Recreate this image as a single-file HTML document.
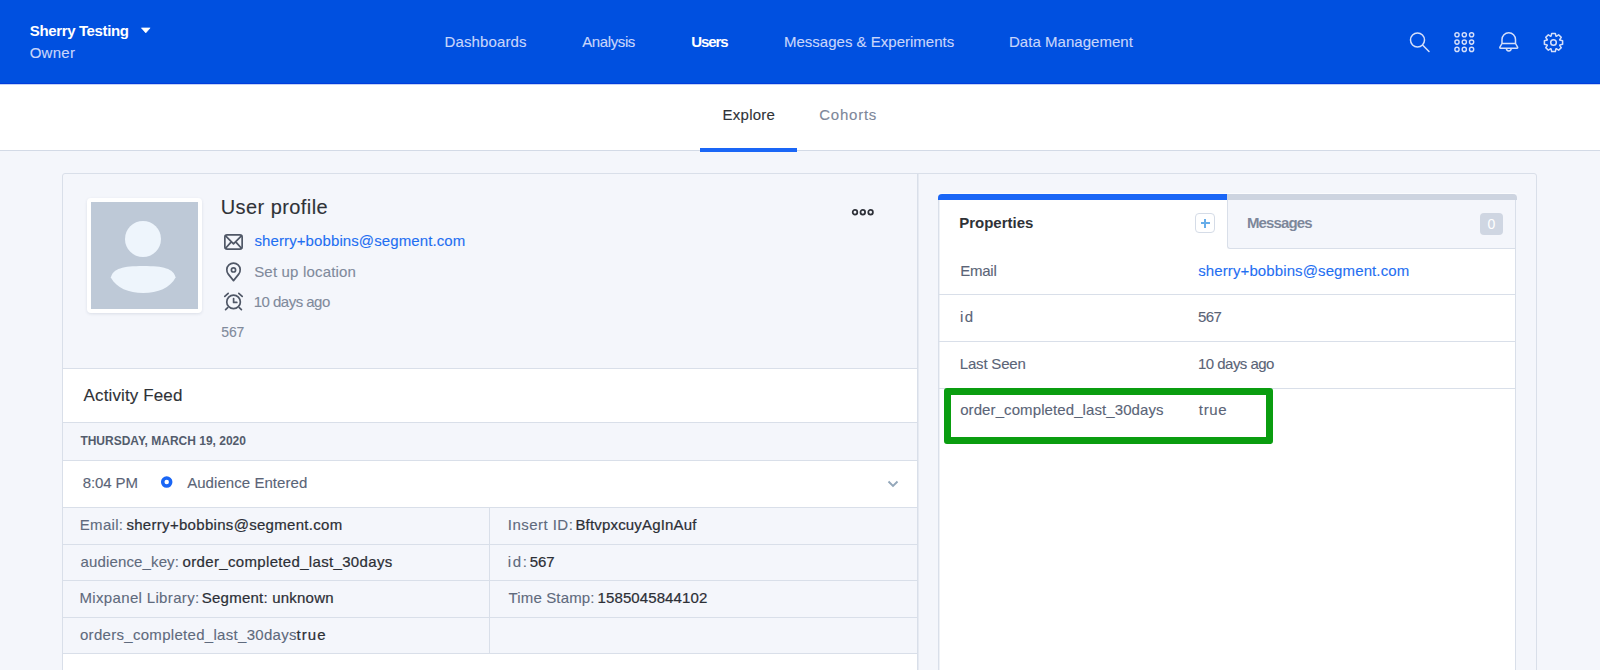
<!DOCTYPE html>
<html><head><meta charset="utf-8"><style>
html,body{margin:0;padding:0;width:1600px;height:670px;overflow:hidden;background:#f4f6fb;font-family:"Liberation Sans", sans-serif}
.t{position:absolute;white-space:nowrap}
.bm{display:inline-block;width:0;height:0;vertical-align:baseline}
</style></head><body>

<div style="position:absolute;left:0;top:0;width:1600px;height:84px;background:#0050e0"></div>
<div style="position:absolute;left:0;top:83px;width:1600px;height:1px;background:#003ddc"></div>
<div style="position:absolute;left:0;top:84px;width:1600px;height:66px;background:#fff"></div>
<div style="position:absolute;left:0;top:84px;width:1600px;height:1px;background:#c4d3f6"></div>
<div style="position:absolute;left:0;top:150px;width:1600px;height:1px;background:#d3dae6"></div>
<div style="position:absolute;left:700px;top:148px;width:97px;height:4px;background:#1a66f6"></div>
<!-- card -->
<div style="position:absolute;left:62px;top:173px;width:1473px;height:600px;border:1px solid #d9dfe9;border-radius:3px;background:#f4f6fb"></div>
<div style="position:absolute;left:917px;top:174px;width:1px;height:500px;background:#d9dfe9"></div>
<div style="position:absolute;left:918px;top:174px;width:1px;height:500px;background:#e6eaf2"></div>
<!-- avatar -->
<div style="position:absolute;left:87px;top:198px;width:115px;height:115px;background:#fff;border-radius:4px;box-shadow:0 1px 3px rgba(40,60,90,.12)"></div>
<div style="position:absolute;left:91px;top:202px;width:107px;height:107px;background:#bec9d7"></div>
<div style="position:absolute;left:125px;top:221px;width:36px;height:36px;border-radius:50%;background:#eef5fc"></div>
<svg style="position:absolute;left:100px;top:260px" width="90" height="40" viewBox="100 260 90 40"><path d="M110.8 277.5 C113 268.5 123 266 143.2 266 C163.5 266 173.5 268.5 175.6 277.5 C170 288 158 293 143.2 293 C128.5 293 116.5 288 110.8 277.5 Z" fill="#eef5fc"/></svg>
<!-- profile icons -->
<svg style="position:absolute;left:218px;top:228px" width="32" height="90" viewBox="218 228 32 90" fill="none" stroke="#4f5766" stroke-width="1.7" stroke-linecap="round" stroke-linejoin="round">
<rect x="224.85" y="234.85" width="17.3" height="14.3" rx="2.3"/>
<path d="M225.6 235.8 L233.5 243.8 L241.4 235.8 M225.6 248.3 L230.6 242.6 M241.4 248.3 L236.4 242.6"/>
<path d="M233.5 280.6 L228.28 274.1 A6.7 6.7 0 1 1 238.72 274.1 Z"/>
<circle cx="233.5" cy="269.9" r="2.1"/>
<circle cx="233.55" cy="301.9" r="6.8"/>
<path d="M233.6 298.6 V302.4 H236.8"/>
<path d="M224.8 296.4 L228.2 293.4 M242.2 296.4 L238.8 293.4 M225.6 309.6 L227.7 307.6 M241.4 309.6 L239.3 307.6"/>
</svg>
<!-- dots menu -->
<svg style="position:absolute;left:850px;top:207px" width="26" height="11" viewBox="0 0 26 11">
<circle cx="5" cy="5.2" r="2.3" fill="none" stroke="#2d3038" stroke-width="1.75"/>
<circle cx="12.8" cy="5.2" r="2.3" fill="none" stroke="#2d3038" stroke-width="1.75"/>
<circle cx="20.6" cy="5.2" r="2.3" fill="none" stroke="#2d3038" stroke-width="1.75"/>
</svg>
<!-- activity feed -->
<div style="position:absolute;left:63px;top:368px;width:854px;height:1px;background:#d9dfe9"></div>
<div style="position:absolute;left:63px;top:369px;width:854px;height:53px;background:#fff"></div>
<div style="position:absolute;left:63px;top:422px;width:854px;height:1px;background:#d9dfe9"></div>
<div style="position:absolute;left:63px;top:460px;width:854px;height:1px;background:#d9dfe9"></div>
<div style="position:absolute;left:63px;top:461px;width:854px;height:46px;background:#fff"></div>
<div style="position:absolute;left:63px;top:507px;width:854px;height:1px;background:#d9dfe9"></div>
<div style="position:absolute;left:63px;top:544px;width:854px;height:1px;background:#d9dfe9"></div>
<div style="position:absolute;left:63px;top:580px;width:854px;height:1px;background:#d9dfe9"></div>
<div style="position:absolute;left:63px;top:617px;width:854px;height:1px;background:#d9dfe9"></div>
<div style="position:absolute;left:63px;top:653px;width:854px;height:1px;background:#d9dfe9"></div>
<div style="position:absolute;left:63px;top:654px;width:854px;height:20px;background:#fff"></div>
<div style="position:absolute;left:489px;top:508px;width:1px;height:145px;background:#d9dfe9"></div>
<svg style="position:absolute;left:155px;top:472px" width="24" height="20" viewBox="155 472 24 20"><circle cx="166.7" cy="482.1" r="4.0" fill="none" stroke="#1a66f5" stroke-width="3.5"/></svg>
<svg style="position:absolute;left:886px;top:479px" width="14" height="10" viewBox="0 0 14 10"><path d="M2.5 2.5 L7 7 L11.5 2.5" fill="none" stroke="#93a7ba" stroke-width="1.9"/></svg>
<!-- right panel -->
<div style="position:absolute;left:938px;top:194px;width:578px;height:500px;box-sizing:border-box;border:1px solid #d9dfe9;border-top:none;background:#fff;border-radius:4px 4px 0 0"></div>
<div style="position:absolute;left:938px;top:193px;width:579px;height:1px;background:#fbfcfe;border-radius:4px 4px 0 0"></div>
<div style="position:absolute;left:938px;top:194px;width:289px;height:6px;background:#1a66f6;border-radius:4px 0 0 0"></div>
<div style="position:absolute;left:1227px;top:194px;width:290px;height:6px;background:#cdd4e0;border-radius:0 4px 0 0"></div>
<div style="position:absolute;left:1227px;top:200px;width:288px;height:49px;box-sizing:border-box;border-left:1px solid #d9dfe9;border-bottom:1px solid #d9dfe9;background:#f4f6fb;border-radius:0 0 0 3px"></div>
<div style="position:absolute;left:1195px;top:213px;width:20px;height:20px;box-sizing:border-box;border:1px solid #d5dce7;border-radius:4px;background:#fff"></div>
<div style="position:absolute;left:1200.5px;top:222px;width:9px;height:2px;background:#67ade9"></div>
<div style="position:absolute;left:1204px;top:218.5px;width:2px;height:9px;background:#67ade9"></div>
<div style="position:absolute;left:1480px;top:213px;width:23px;height:22px;border-radius:4px;background:#cfd6e2"></div>
<div style="position:absolute;left:1480px;top:213px;width:23px;height:22px;text-align:center;line-height:22px;font-size:14px;color:#fff">0</div>
<div style="position:absolute;left:939px;top:200px;width:1px;height:480px;background:#eef1f6"></div>
<div style="position:absolute;left:939px;top:294px;width:576px;height:1px;background:#d9dfe9"></div>
<div style="position:absolute;left:939px;top:341px;width:576px;height:1px;background:#d9dfe9"></div>
<div style="position:absolute;left:939px;top:388px;width:576px;height:1px;background:#d9dfe9"></div>
<div style="position:absolute;left:944px;top:388px;width:329px;height:56px;box-sizing:border-box;border:7px solid #0a9d10;border-radius:3px"></div>
<!-- header icons -->
<svg style="position:absolute;left:1400px;top:22px" width="180" height="40" viewBox="1400 22 180 40" fill="none" stroke="#d5dffa" stroke-width="1.5">
<circle cx="1417.5" cy="40" r="7.0"/>
<path d="M1422.8 45.3 L1429 51.5" stroke-linecap="round"/>
<g stroke-width="1.4">
<circle cx="1457" cy="34.8" r="2.1"/><circle cx="1464.3" cy="34.8" r="2.1"/><circle cx="1471.6" cy="34.8" r="2.1"/>
<circle cx="1457" cy="42.1" r="2.1"/><circle cx="1464.3" cy="42.1" r="2.1"/><circle cx="1471.6" cy="42.1" r="2.1"/>
<circle cx="1457" cy="49.4" r="2.1"/><circle cx="1464.3" cy="49.4" r="2.1"/><circle cx="1471.6" cy="49.4" r="2.1"/>
</g>
<path d="M1502 43.5 V39.6 A6.75 6.75 0 0 1 1515.5 39.6 V43.5 M1502 43.5 H1515.5 L1517.6 47.2 Q1518 48.2 1517 48.2 H1500.5 Q1499.5 48.2 1499.9 47.2 Z" stroke-linejoin="round"/>
<path d="M1506.4 48.5 A2.4 2.4 0 0 0 1511.2 48.5"/>
</svg>
<svg style="position:absolute;left:1543px;top:32px" width="21" height="21" viewBox="-10.5 -10.5 21 21" fill="none" stroke="#d5dffa" stroke-width="1.5">
<path d="M6.36 -2.40 L9.11 -1.85 L9.11 1.85 L6.36 2.40 L6.19 2.81 L7.75 5.14 L5.14 7.75 L2.81 6.19 L2.40 6.36 L1.85 9.11 L-1.85 9.11 L-2.40 6.36 L-2.81 6.19 L-5.14 7.75 L-7.75 5.14 L-6.19 2.81 L-6.36 2.40 L-9.11 1.85 L-9.11 -1.85 L-6.36 -2.40 L-6.19 -2.81 L-7.75 -5.14 L-5.14 -7.75 L-2.81 -6.19 L-2.40 -6.36 L-1.85 -9.11 L1.85 -9.11 L2.40 -6.36 L2.81 -6.19 L5.14 -7.75 L7.75 -5.14 L6.19 -2.81Z" stroke-linejoin="round"/>
<circle cx="0" cy="0" r="2.8"/>
</svg>
<svg style="position:absolute;left:140px;top:26px" width="12" height="8" viewBox="0 0 12 8"><path d="M1.4 1.9 H10.1 L5.75 6.9Z" fill="#fff" stroke="#fff" stroke-width="0.6" stroke-linejoin="round"/></svg>

<div id="hname" class="t" style="left:29.79px;top:21.71px;font-size:15px;line-height:18px;font-weight:700;color:#ffffff;letter-spacing:-0.364px;">Sherry Testing<i class="bm"></i></div><div id="hrole" class="t" style="left:29.67px;top:43.90px;font-size:15px;line-height:18px;font-weight:400;color:#c9d6fb;letter-spacing:0.289px;-webkit-text-stroke:0.12px #c9d6fb;">Owner<i class="bm"></i></div><div id="n1" class="t" style="left:444.58px;top:33.01px;font-size:15px;line-height:18px;font-weight:400;color:#c9d6fb;letter-spacing:0.108px;-webkit-text-stroke:0.12px #c9d6fb;">Dashboards<i class="bm"></i></div><div id="n2" class="t" style="left:582.26px;top:33.01px;font-size:15px;line-height:18px;font-weight:400;color:#c9d6fb;letter-spacing:-0.399px;-webkit-text-stroke:0.12px #c9d6fb;">Analysis<i class="bm"></i></div><div id="n3" class="t" style="left:691.19px;top:33.01px;font-size:15px;line-height:18px;font-weight:700;color:#ffffff;letter-spacing:-1.100px;">Users<i class="bm"></i></div><div id="n4" class="t" style="left:783.98px;top:33.01px;font-size:15px;line-height:18px;font-weight:400;color:#c9d6fb;letter-spacing:0.008px;-webkit-text-stroke:0.12px #c9d6fb;">Messages &amp; Experiments<i class="bm"></i></div><div id="n5" class="t" style="left:1008.98px;top:33.01px;font-size:15px;line-height:18px;font-weight:400;color:#c9d6fb;letter-spacing:0.037px;-webkit-text-stroke:0.12px #c9d6fb;">Data Management<i class="bm"></i></div><div id="s1" class="t" style="left:722.54px;top:106.01px;font-size:15px;line-height:18px;font-weight:400;color:#2f3237;letter-spacing:0.259px;-webkit-text-stroke:0.12px #2f3237;">Explore<i class="bm"></i></div><div id="s2" class="t" style="left:819.26px;top:106.01px;font-size:15px;line-height:18px;font-weight:400;color:#7d879a;letter-spacing:0.764px;-webkit-text-stroke:0.12px #7d879a;">Cohorts<i class="bm"></i></div><div id="up" class="t" style="left:220.71px;top:195.41px;font-size:20px;line-height:24px;font-weight:400;color:#2f3237;letter-spacing:0.434px;-webkit-text-stroke:0.12px #2f3237;">User profile<i class="bm"></i></div><div id="ue" class="t" style="left:254.49px;top:232.01px;font-size:15px;line-height:18px;font-weight:400;color:#1f6ff2;letter-spacing:0.099px;-webkit-text-stroke:0.12px #1f6ff2;">sherry+bobbins@segment.com<i class="bm"></i></div><div id="ul" class="t" style="left:254.18px;top:263.01px;font-size:15px;line-height:18px;font-weight:400;color:#808a9b;letter-spacing:0.180px;-webkit-text-stroke:0.12px #808a9b;">Set up location<i class="bm"></i></div><div id="ud" class="t" style="left:253.71px;top:293.40px;font-size:15px;line-height:18px;font-weight:400;color:#808a9b;letter-spacing:-0.514px;-webkit-text-stroke:0.12px #808a9b;">10 days ago<i class="bm"></i></div><div id="uid" class="t" style="left:221.17px;top:323.51px;font-size:14px;line-height:17px;font-weight:400;color:#808a9b;letter-spacing:-0.058px;-webkit-text-stroke:0.12px #808a9b;">567<i class="bm"></i></div><div id="af" class="t" style="left:83.54px;top:386.01px;font-size:17px;line-height:20px;font-weight:400;color:#2f3237;letter-spacing:0.131px;-webkit-text-stroke:0.12px #2f3237;">Activity Feed<i class="bm"></i></div><div id="dt" class="t" style="left:80.38px;top:434.41px;font-size:12px;line-height:14px;font-weight:700;color:#535c6c;letter-spacing:-0.001px;">THURSDAY, MARCH 19, 2020<i class="bm"></i></div><div id="tm" class="t" style="left:82.84px;top:474.01px;font-size:15px;line-height:18px;font-weight:400;color:#5a6477;letter-spacing:-0.125px;-webkit-text-stroke:0.12px #5a6477;">8:04 PM<i class="bm"></i></div><div id="ev" class="t" style="left:187.14px;top:474.01px;font-size:15px;line-height:18px;font-weight:400;color:#5a6477;letter-spacing:0.061px;-webkit-text-stroke:0.12px #5a6477;">Audience Entered<i class="bm"></i></div><div id="l1" class="t" style="left:79.79px;top:516.41px;font-size:15px;line-height:18px;font-weight:400;color:#5f6a7d;letter-spacing:0.305px;-webkit-text-stroke:0.12px #5f6a7d;">Email:<i class="bm"></i></div><div id="v1" class="t" style="left:126.41px;top:516.41px;font-size:15px;line-height:18px;font-weight:400;color:#2c2f36;letter-spacing:0.304px;-webkit-text-stroke:0.22px #2c2f36;">sherry+bobbins@segment.com<i class="bm"></i></div><div id="l2" class="t" style="left:80.56px;top:552.51px;font-size:15px;line-height:18px;font-weight:400;color:#5f6a7d;letter-spacing:0.137px;-webkit-text-stroke:0.12px #5f6a7d;">audience_key:<i class="bm"></i></div><div id="v2" class="t" style="left:182.61px;top:552.51px;font-size:15px;line-height:18px;font-weight:400;color:#2c2f36;letter-spacing:0.333px;-webkit-text-stroke:0.22px #2c2f36;">order_completed_last_30days<i class="bm"></i></div><div id="l3" class="t" style="left:79.48px;top:589.01px;font-size:15px;line-height:18px;font-weight:400;color:#5f6a7d;letter-spacing:0.344px;-webkit-text-stroke:0.12px #5f6a7d;">Mixpanel Library:<i class="bm"></i></div><div id="v3" class="t" style="left:201.84px;top:589.01px;font-size:15px;line-height:18px;font-weight:400;color:#2c2f36;letter-spacing:0.219px;-webkit-text-stroke:0.22px #2c2f36;">Segment: unknown<i class="bm"></i></div><div id="l4" class="t" style="left:79.98px;top:626.01px;font-size:15px;line-height:18px;font-weight:400;color:#5f6a7d;letter-spacing:0.300px;-webkit-text-stroke:0.12px #5f6a7d;">orders_completed_last_30days<i class="bm"></i></div><div id="v4" class="t" style="left:296.40px;top:626.01px;font-size:15px;line-height:18px;font-weight:400;color:#2c2f36;letter-spacing:1.105px;-webkit-text-stroke:0.22px #2c2f36;">true<i class="bm"></i></div><div id="l5" class="t" style="left:507.83px;top:516.41px;font-size:15px;line-height:18px;font-weight:400;color:#5f6a7d;letter-spacing:0.462px;-webkit-text-stroke:0.12px #5f6a7d;">Insert ID:<i class="bm"></i></div><div id="v5" class="t" style="left:575.40px;top:516.41px;font-size:15px;line-height:18px;font-weight:400;color:#2c2f36;letter-spacing:0.179px;-webkit-text-stroke:0.22px #2c2f36;">BftvpxcuyAgInAuf<i class="bm"></i></div><div id="l6" class="t" style="left:507.87px;top:552.51px;font-size:15px;line-height:18px;font-weight:400;color:#5f6a7d;letter-spacing:1.561px;-webkit-text-stroke:0.12px #5f6a7d;">id:<i class="bm"></i></div><div id="v6" class="t" style="left:529.67px;top:552.51px;font-size:15px;line-height:18px;font-weight:400;color:#2c2f36;letter-spacing:-0.089px;-webkit-text-stroke:0.22px #2c2f36;">567<i class="bm"></i></div><div id="l7" class="t" style="left:508.50px;top:589.01px;font-size:15px;line-height:18px;font-weight:400;color:#5f6a7d;letter-spacing:0.148px;-webkit-text-stroke:0.12px #5f6a7d;">Time Stamp:<i class="bm"></i></div><div id="v7" class="t" style="left:597.61px;top:589.01px;font-size:15px;line-height:18px;font-weight:400;color:#2c2f36;letter-spacing:0.097px;-webkit-text-stroke:0.22px #2c2f36;">1585045844102<i class="bm"></i></div><div id="pt" class="t" style="left:959.20px;top:214.01px;font-size:15px;line-height:18px;font-weight:700;color:#2f3237;letter-spacing:-0.005px;">Properties<i class="bm"></i></div><div id="mt" class="t" style="left:1246.99px;top:214.01px;font-size:15px;line-height:18px;font-weight:700;color:#7d879a;letter-spacing:-0.884px;">Messages<i class="bm"></i></div><div id="p1k" class="t" style="left:960.27px;top:261.81px;font-size:15px;line-height:18px;font-weight:400;color:#5a6477;letter-spacing:-0.254px;-webkit-text-stroke:0.12px #5a6477;">Email<i class="bm"></i></div><div id="p1v" class="t" style="left:1198.20px;top:261.61px;font-size:15px;line-height:18px;font-weight:400;color:#1f6ff2;letter-spacing:0.111px;-webkit-text-stroke:0.12px #1f6ff2;">sherry+bobbins@segment.com<i class="bm"></i></div><div id="p2k" class="t" style="left:959.89px;top:307.81px;font-size:15px;line-height:18px;font-weight:400;color:#5a6477;letter-spacing:1.581px;-webkit-text-stroke:0.12px #5a6477;">id<i class="bm"></i></div><div id="p2v" class="t" style="left:1197.98px;top:307.81px;font-size:15px;line-height:18px;font-weight:400;color:#5a6477;letter-spacing:-0.632px;-webkit-text-stroke:0.12px #5a6477;">567<i class="bm"></i></div><div id="p3k" class="t" style="left:959.80px;top:354.81px;font-size:15px;line-height:18px;font-weight:400;color:#5a6477;letter-spacing:-0.196px;-webkit-text-stroke:0.12px #5a6477;">Last Seen<i class="bm"></i></div><div id="p3v" class="t" style="left:1198.06px;top:354.81px;font-size:15px;line-height:18px;font-weight:400;color:#5a6477;letter-spacing:-0.539px;-webkit-text-stroke:0.12px #5a6477;">10 days ago<i class="bm"></i></div><div id="p4k" class="t" style="left:960.17px;top:401.11px;font-size:15px;line-height:18px;font-weight:400;color:#5a6477;letter-spacing:0.094px;-webkit-text-stroke:0.12px #5a6477;">order_completed_last_30days<i class="bm"></i></div><div id="p4v" class="t" style="left:1198.80px;top:401.11px;font-size:15px;line-height:18px;font-weight:400;color:#5a6477;letter-spacing:0.667px;-webkit-text-stroke:0.12px #5a6477;">true<i class="bm"></i></div>
</body></html>
